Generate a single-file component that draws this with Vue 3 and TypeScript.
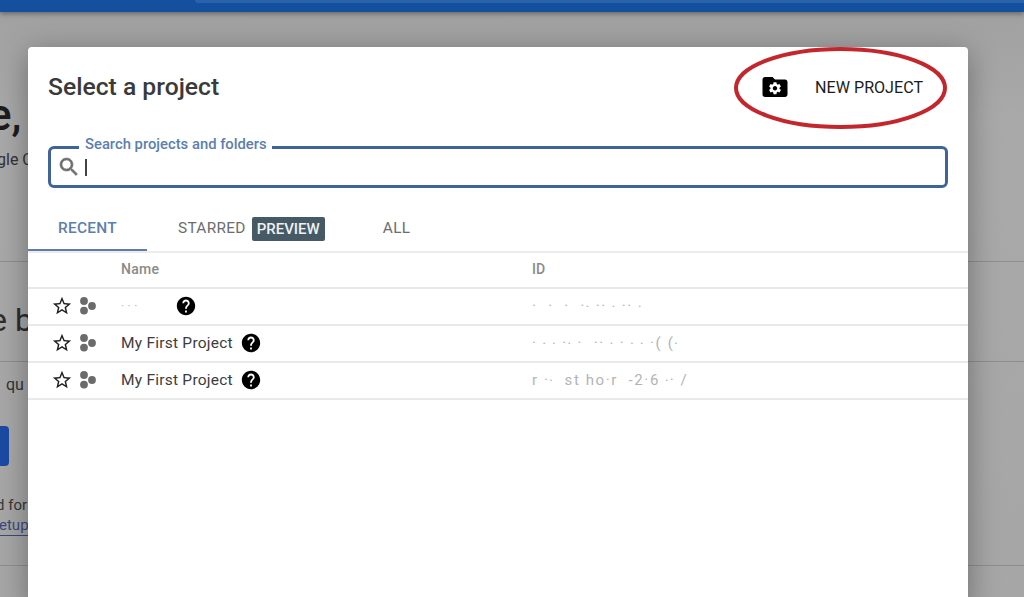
<script setup lang="ts">
interface Row { name: string; id: string; hidden?: boolean }
const rows: Row[] = [
  { name: 'My First Project', id: '·  ·  ·  ·‧ ·· ‧ ·· ‧', hidden: true },
  { name: 'My First Project', id: '· ‧ ‧ ·‧ ·  ·· ‧ · ‧ ‧ ·( (‧' },
  { name: 'My First Project', id: 'r ·‧  st ho·r  -2·6 ‧· /' }
]
const star = 'M22 9.24l-7.19-.62L12 2 9.19 8.63 2 9.24l5.46 4.73L5.82 21 12 17.27 18.18 21l-1.63-7.03L22 9.24zM12 15.4l-3.76 2.27 1-4.28-3.32-2.88 4.38-.38L12 6.1l1.71 4.04 4.38.38-3.32 2.88 1 4.28L12 15.4z'
const help = 'M12 2C6.48 2 2 6.48 2 12s4.48 10 10 10 10-4.48 10-10S17.52 2 12 2zm1 17h-2v-2h2v2zm2.07-7.75l-.9.92C13.45 12.9 13 13.5 13 15h-2v-.5c0-1.1.45-2.1 1.17-2.83l1.24-1.26c.37-.36.59-.86.59-1.41 0-1.1-.9-2-2-2s-2 .9-2 2H8c0-2.21 1.79-4 4-4s4 1.79 4 4c0 .88-.36 1.68-.93 2.25z'
</script>

<template>
  <div class="page">
    <header class="topbar"><div class="topbar-light"></div></header>
    <main class="behind">
      <div class="b-title">e,</div>
      <div class="b-sub">gle C</div>
      <hr class="b-rule first" />
      <div class="b-head">e b</div>
      <hr class="b-rule second" />
      <div class="b-q">qu</div>
      <div class="b-button"></div>
      <div class="b-for">d for</div>
      <a class="b-link">etup</a>
      <hr class="b-rule third" />
    </main>

    <section class="dialog">
      <div class="head">
        <h1>Select a project</h1>
        <button class="new">
          <svg class="folder" viewBox="0 0 24 24" width="30" height="30">
            <path fill="#000" d="M20 6h-8l-2-2H4c-1.1 0-2 .9-2 2v12c0 1.1.9 2 2 2h16c1.1 0 2-.9 2-2V8c0-1.1-.9-2-2-2z" />
            <g transform="translate(6 7) scale(.5)">
              <path fill="#fff" d="M19.14 12.94c.04-.3.06-.61.06-.94 0-.32-.02-.64-.07-.94l2.03-1.58c.18-.14.23-.41.12-.61l-1.92-3.32c-.12-.22-.37-.29-.59-.22l-2.39.96c-.5-.38-1.03-.7-1.62-.94l-.36-2.54c-.04-.24-.24-.41-.48-.41h-3.84c-.24 0-.43.17-.47.41l-.36 2.54c-.59.24-1.13.57-1.62.94l-2.39-.96c-.22-.08-.47 0-.59.22L2.74 8.87c-.12.21-.08.47.12.61l2.03 1.58c-.05.3-.09.63-.09.94s.02.64.07.94l-2.03 1.58c-.18.14-.23.41-.12.61l1.92 3.32c.12.22.37.29.59.22l2.39-.96c.5.38 1.03.7 1.62.94l.36 2.54c.05.24.24.41.48.41h3.84c.24 0 .44-.17.47-.41l.36-2.54c.59-.24 1.13-.56 1.62-.94l2.39.96c.22.08.47 0 .59-.22l1.92-3.32c.12-.22.07-.47-.12-.61l-2.01-1.58zM12 15.6c-1.98 0-3.6-1.62-3.6-3.6s1.62-3.6 3.6-3.6 3.6 1.62 3.6 3.6-1.62 3.6-3.6 3.6z" />
            </g>
          </svg>
          <span>NEW PROJECT</span>
        </button>
      </div>

      <div class="search">
        <span class="label">Search projects and folders</span>
        <svg viewBox="0 0 24 24" width="24" height="24">
          <path fill="#6f6f6f" stroke="#6f6f6f" stroke-width=".6" d="M15.5 14h-.79l-.28-.27C15.41 12.59 16 11.11 16 9.5 16 5.91 13.09 3 9.5 3S3 5.91 3 9.5 5.91 16 9.5 16c1.61 0 3.09-.59 4.23-1.57l.27.28v.79l5 4.99L20.49 19l-4.99-5zm-6 0C7.01 14 5 11.99 5 9.5S7.01 5 9.5 5 14 7.01 14 9.5 11.99 14 9.5 14z" />
        </svg>
        <i class="caret"></i>
      </div>

      <nav class="tabs">
        <div class="tab active">RECENT</div>
        <div class="tab starred">STARRED <b class="chip">PREVIEW</b></div>
        <div class="tab all">ALL</div>
      </nav>

      <div class="row header">
        <div class="c-icons"></div>
        <div class="c-name">Name</div>
        <div class="c-id">ID</div>
      </div>
      <div v-for="(r, i) in rows" :key="i" class="row">
        <div class="c-icons">
          <svg viewBox="0 0 24 24" width="22" height="22"><path fill="#202124" :d="star" /></svg>
          <svg viewBox="0 0 18 18" width="18" height="18" class="cluster">
            <circle cx="5" cy="4" r="3.9" fill="#6b6b6b" />
            <circle cx="13" cy="9" r="3.9" fill="#6b6b6b" />
            <circle cx="5" cy="13.6" r="3.9" fill="#6b6b6b" />
          </svg>
        </div>
        <div class="c-name">
          <span v-if="!r.hidden" class="pname">{{ r.name }}</span>
          <span v-else class="blur">·  ·  ·</span>
          <svg viewBox="0 0 24 24" width="22" height="22"><path fill="#000" :d="help" /></svg>
        </div>
        <div class="c-id"><span class="specks">{{ r.id }}</span></div>
      </div>

      <svg class="ring" viewBox="0 0 215 84" width="215" height="84">
        <ellipse cx="107.5" cy="42" rx="104.5" ry="39" fill="none" stroke="#c4262e" stroke-width="4" />
      </svg>
    </section>
  </div>
</template>

<style>
html, body { margin: 0; }
</style>

<style scoped>
.page {
  position: relative;
  width: 1024px;
  height: 597px;
  overflow: hidden;
  background: linear-gradient(#a0a0a0, #a9a9a9 20%, #a6a6a6);
  font-family: Roboto, "Liberation Sans", sans-serif;
}
.topbar {
  height: 12px;
  background: #15509f;
  box-shadow: 0 2px 5px rgba(0, 0, 0, .35);
  position: relative;
}
.topbar-light {
  margin-left: 195px;
  height: 3px;
  background: #2a62ac;
  border-bottom-left-radius: 6px;
}
.behind { color: #2a2a2a; position: relative; height: 585px; }
.b-title { position: absolute; left: -12px; top: 77px; font-size: 44px; line-height: 52px; font-weight: 500; color: #1c1c1c; }
.b-sub { position: absolute; left: -3px; top: 138px; font-size: 16px; line-height: 20px; color: #333; }
.b-rule { position: absolute; left: 0; right: 0; margin: 0; border: 0; height: 1px; background: #8e8e8e; }
.first { top: 249px; }
.second { top: 349px; }
.third { top: 553px; }
.b-head { position: absolute; left: -10px; top: 288px; font-size: 32px; line-height: 40px; color: #2d2d2d; }
.b-q { position: absolute; left: 6px; top: 362px; font-size: 16px; line-height: 22px; color: #333; }
.b-button { position: absolute; left: -20px; top: 414px; width: 29px; height: 40px; background: #1c4aa3; border-radius: 4px; }
.b-for { position: absolute; left: -4px; top: 483px; font-size: 15px; line-height: 20px; color: #383838; }
.b-link { position: absolute; left: -1px; top: 503px; font-size: 15px; line-height: 20px; color: #3a4a80; border-bottom: 1px solid #3a4a80; }

.dialog {
  position: absolute;
  left: 28px;
  top: 47px;
  width: 940px;
  height: 560px;
  background: #fff;
  border-radius: 4px;
  box-shadow: 0 6px 30px rgba(0, 0, 0, .35);
}
.head {
  display: flex;
  align-items: center;
  justify-content: space-between;
  height: 80px;
  padding: 0 45px 0 20px;
}
h1 {
  margin: 0;
  font-size: 24.7px;
  line-height: 30px;
  font-weight: 500;
  color: #3a3a3a;
}
.new {
  display: flex;
  align-items: center;
  gap: 25px;
  padding: 0;
  border: 0;
  background: none;
  font: 400 16.1px Roboto, "Liberation Sans", sans-serif;
  color: #1c1c1c;
}
.search {
  position: relative;
  display: flex;
  align-items: center;
  gap: 4px;
  height: 36px;
  margin: 19px 20px 0;
  padding: 0 0 0 6px;
  border: 3px solid #3f6499;
  border-radius: 6px;
}
.label {
  position: absolute;
  left: 28px;
  top: -14px;
  padding: 0 5px 2px 6px;
  background: #fff;
  font-size: 14.8px;
  line-height: 18px;
  font-weight: 500;
  color: #5b80ae;
}
.caret { width: 1.5px; height: 17px; background: #444; }
.tabs {
  display: flex;
  align-items: stretch;
  height: 60px;
  margin-top: 3px;
  border-bottom: 2px solid #ececec;
  box-sizing: content-box;
}
.tab {
  display: flex;
  align-items: center;
  box-sizing: border-box;
  height: 60px;
  padding-top: 16px;
  font-size: 15.4px;
  font-weight: 500;
  letter-spacing: .3px;
  color: #6d6d6d;
  border-bottom: 2px solid transparent;
}
.active {
  width: 119px;
  padding-left: 30px;
  color: #5a80ae;
  border-bottom-color: #5c7ea9;
}
.starred { margin-left: 31px; gap: 6px; font-weight: 400; }
.chip {
  display: inline-block;
  margin-top: 2px;
  padding: 0 5px;
  height: 24px;
  line-height: 24px;
  background: #455a64;
  color: #eef1f3;
  font-size: 15px;
  font-weight: 500;
  letter-spacing: 0;
  border-radius: 2px;
}
.all { margin-left: 58px; font-weight: 400; }
.row {
  display: flex;
  align-items: center;
  height: 33px;
  padding-bottom: 2px;
  border-bottom: 2px solid #e9e9e9;
  font-size: 15.5px;
  color: #3c3c3c;
}
.row.header {
  height: 32px;
  font-size: 14px;
  font-weight: 500;
  color: #8a8a8a;
}
.c-icons {
  display: flex;
  align-items: center;
  width: 93px;
  padding-left: 23px;
  box-sizing: border-box;
  gap: 6px;
}
.c-name { display: flex; align-items: center; gap: 7px; width: 411px; letter-spacing: .24px; }
.blur { width: 47px; color: #bbb; font-size: 12px; white-space: pre; }
.specks { color: #b4b4b4; font-size: 15px; white-space: pre; letter-spacing: 1.6px; }
.ring { position: absolute; left: 705px; top: -1px; pointer-events: none; }
</style>
